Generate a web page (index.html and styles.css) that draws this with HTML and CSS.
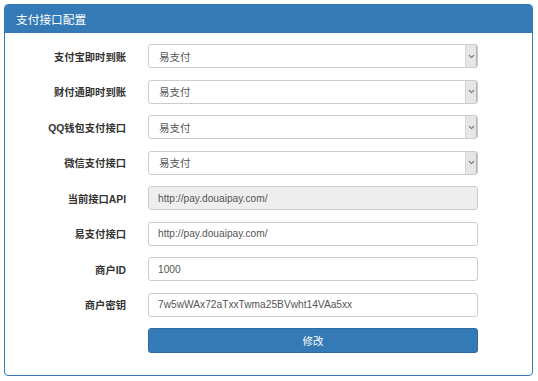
FILE: index.html
```html
<!DOCTYPE html>
<html lang="zh-CN">
<head>
<meta charset="utf-8">
<title>支付接口配置</title>
<link rel="stylesheet" href="styles.css">
</head>
<body>
<div class="panel">
  <div class="panel-heading">支付接口配置</div>
  <form class="panel-body">
    <label class="label">支付宝即时到账</label>
    <div class="select"><span class="value">易支付</span><span class="caret"><svg width="7" height="5" viewBox="0 0 7 5"><path d="M1 1.2 L3.5 3.6 L6 1.2" fill="none" stroke="#6d6d6d" stroke-width="1.1"/></svg></span></div>

    <label class="label">财付通即时到账</label>
    <div class="select"><span class="value">易支付</span><span class="caret"><svg width="7" height="5" viewBox="0 0 7 5"><path d="M1 1.2 L3.5 3.6 L6 1.2" fill="none" stroke="#6d6d6d" stroke-width="1.1"/></svg></span></div>

    <label class="label">QQ钱包支付接口</label>
    <div class="select"><span class="value">易支付</span><span class="caret"><svg width="7" height="5" viewBox="0 0 7 5"><path d="M1 1.2 L3.5 3.6 L6 1.2" fill="none" stroke="#6d6d6d" stroke-width="1.1"/></svg></span></div>

    <label class="label">微信支付接口</label>
    <div class="select"><span class="value">易支付</span><span class="caret"><svg width="7" height="5" viewBox="0 0 7 5"><path d="M1 1.2 L3.5 3.6 L6 1.2" fill="none" stroke="#6d6d6d" stroke-width="1.1"/></svg></span></div>

    <label class="label">当前接口API</label>
    <input class="input" type="text" value="http://pay.douaipay.com/" disabled>

    <label class="label">易支付接口</label>
    <input class="input" type="text" value="http://pay.douaipay.com/">

    <label class="label">商户ID</label>
    <input class="input" type="text" value="1000">

    <label class="label">商户密钥</label>
    <input class="input" type="text" value="7w5wWAx72aTxxTwma25BVwht14VAa5xx">

    <span class="spacer"></span>
    <button class="btn" type="button">修改</button>
  </form>
</div>
</body>
</html>
```

FILE: styles.css
```css
html, body {
  background: #ffffff;
}
body {
  margin: 4px 5px 4px 4px;
  font-family: "Liberation Sans", Arial, "Noto Sans CJK SC", sans-serif;
  color: #333;
}
.panel {
  border: 1px solid #337ab7;
  border-radius: 4px;
  overflow: hidden;
  background: #fff;
}
.panel-heading {
  height: 28px;
  background: #337ab7;
  color: #fff;
  font-family: "Noto Sans CJK SC", sans-serif;
  font-size: 11.7px;
  line-height: 28px;
  padding-left: 11px;
}
.panel-body {
  margin: 0;
  padding: 11px 54px 22px 0;
  display: grid;
  grid-template-columns: 121px 330px;
  column-gap: 22px;
  row-gap: 11.5px;
  align-items: center;
}
.label {
  text-align: right;
  font-family: "Liberation Sans", Arial, "Noto Sans CJK SC", sans-serif;
  font-weight: bold;
  font-size: 10.3px;
  color: #333;
}
.select, .input {
  box-sizing: border-box;
  height: 24px;
  border: 1px solid #cccccc;
  border-radius: 3px;
  background: #fff;
  font-family: "Liberation Sans", Arial, "Noto Sans CJK SC", sans-serif;
  font-size: 10.2px;
  color: #555;
}
.select {
  display: flex;
  align-items: center;
  justify-content: space-between;
  padding-left: 10px;
  overflow: hidden;
}
.select .value {
  font-family: "Noto Sans CJK SC", sans-serif;
  font-size: 10.5px;
}
.caret {
  width: 12px;
  height: 100%;
  box-sizing: border-box;
  background: #e6e6e6;
  border-left: 1px solid #d6d6d6;
  border-right: 1px solid #b5b5b5;
  border-radius: 0 2px 2px 0;
  display: flex;
  align-items: center;
  justify-content: center;
}
.input {
  width: 100%;
  padding: 0 9px;
  margin: 0;
  outline: none;
}
.input:disabled {
  background: #eeeeee;
  color: #555;
}
.spacer {
  display: block;
}
.btn {
  height: 25px;
  margin: 0;
  border: 1px solid #2e6da4;
  border-radius: 3px;
  background: #337ab7;
  color: #fff;
  font-family: "Noto Sans CJK SC", sans-serif;
  font-size: 10.5px;
  padding: 0;
  cursor: pointer;
}
```
